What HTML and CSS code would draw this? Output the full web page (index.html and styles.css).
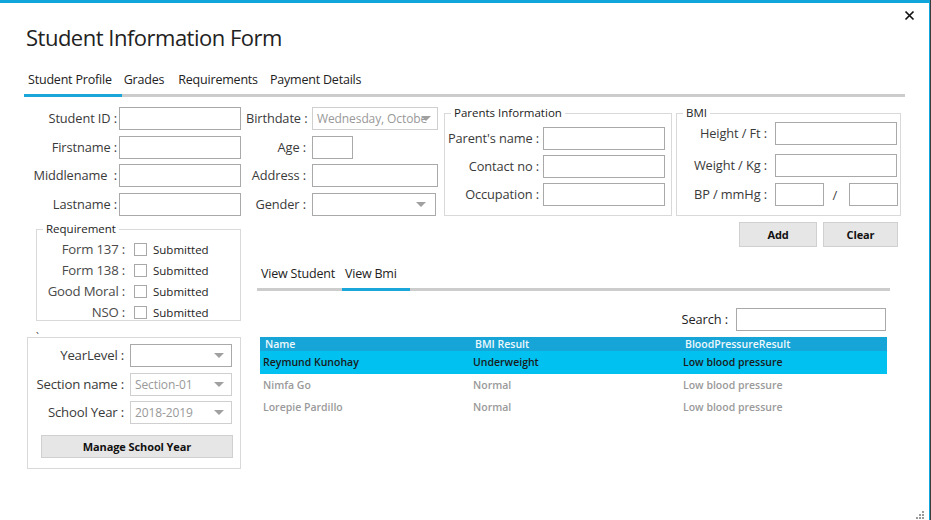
FILE: index.html
```html
<!DOCTYPE html>
<html>
<head>
<meta charset="utf-8">
<title>Student Information Form</title>
<link rel="stylesheet" href="styles.css">
</head>
<body>
<div class="window">
  <div class="titlebar">
    <h1 class="title">Student Information Form</h1>
    <span class="close"><svg width="11" height="11" viewBox="0 0 11 11"><path d="M1.5 1.5L9.5 9.5M9.5 1.5L1.5 9.5" stroke="#111" stroke-width="1.7" fill="none"/></svg></span>
  </div>

  <div class="tabs">
    <span class="tab t1">Student Profile</span>
    <span class="tab t2">Grades</span>
    <span class="tab t3">Requirements</span>
    <span class="tab t4">Payment Details</span>
  </div>
  <div class="tabbar"><div class="tabbar-active"></div></div>

  <div class="top-row">
    <div class="form form-left">
      <label>Student ID :</label><span class="input"></span>
      <label>Firstname :</label><span class="input"></span>
      <label>Middlename&nbsp;&nbsp;:</label><span class="input"></span>
      <label>Lastname :</label><span class="input"></span>
    </div>
    <div class="form form-mid">
      <label>Birthdate :</label><span class="input combo disabled wide"><span class="ctext">Wednesday, Octobe</span><span class="arrow"></span></span>
      <label>Age :</label><span class="input age"></span>
      <label>Address :</label><span class="input"></span>
      <label>Gender :</label><span class="input combo gender"><span class="ctext"></span><span class="arrow"></span></span>
    </div>
    <div class="group parents">
      <span class="legend">Parents Information</span>
      <div class="gform pform">
        <label>Parent's name :</label><span class="input"></span>
        <label>Contact no :</label><span class="input"></span>
        <label>Occupation :</label><span class="input"></span>
      </div>
    </div>
    <div class="group bmi">
      <span class="legend">BMI</span>
      <div class="bform">
        <div class="brow r1"><label>Height / Ft :</label><span class="input"></span></div>
        <div class="brow r2"><label>Weight / Kg :</label><span class="input"></span></div>
        <div class="brow r3"><label>BP / mmHg :</label><span class="input bp"></span><span class="slash">/</span><span class="input bp"></span></div>
      </div>
    </div>
  </div>

  <div class="bottom-row">
    <div class="left-col">
      <div class="group req">
        <span class="legend">Requirement</span>
        <div class="reqlist">
          <label>Form 137 :</label><span class="check"><span class="box"></span>Submitted</span>
          <label>Form 138 :</label><span class="check"><span class="box"></span>Submitted</span>
          <label>Good Moral :</label><span class="check"><span class="box"></span>Submitted</span>
          <label>NSO :</label><span class="check"><span class="box"></span>Submitted</span>
        </div>
      </div>
      <div class="group year">
        <span class="legend tick">`</span>
        <div class="yform">
          <label>YearLevel :</label><span class="input combo"><span class="ctext"></span><span class="arrow"></span></span>
          <label>Section name :</label><span class="input combo disabled"><span class="ctext">Section-01</span><span class="arrow"></span></span>
          <label>School Year :</label><span class="input combo disabled"><span class="ctext">2018-2019</span><span class="arrow"></span></span>
        </div>
        <button class="btn manage">Manage School Year</button>
      </div>
    </div>

    <div class="right-col">
      <div class="buttons">
        <button class="btn add">Add</button>
        <button class="btn clear">Clear</button>
      </div>
      <div class="itabs">
        <span class="itab">View Student</span>
        <span class="itab active">View Bmi</span>
      </div>
      <div class="itabbar"><div class="itabbar-active"></div></div>
      <div class="search">
        <label>Search :</label><span class="input search-input"></span>
      </div>
      <div class="grid">
        <div class="grow head"><span>Name</span><span>BMI Result</span><span>BloodPressureResult</span></div>
        <div class="grow sel"><span>Reymund Kunohay</span><span>Underweight</span><span>Low blood pressure</span></div>
        <div class="grow"><span>Nimfa Go</span><span>Normal</span><span>Low blood pressure</span></div>
        <div class="grow"><span>Lorepie Pardillo</span><span>Normal</span><span>Low blood pressure</span></div>
      </div>
    </div>
  </div>
  <span class="grip"><svg width="8" height="8" viewBox="0 0 8 8"><rect x="6" y="0" width="2" height="2" fill="#9a9a9a"/><rect x="3" y="3" width="2" height="2" fill="#9a9a9a"/><rect x="6" y="3" width="2" height="2" fill="#9a9a9a"/><rect x="0" y="6" width="2" height="2" fill="#9a9a9a"/><rect x="3" y="6" width="2" height="2" fill="#9a9a9a"/><rect x="6" y="6" width="2" height="2" fill="#9a9a9a"/></svg></span>
</div>
</body>
</html>
```

FILE: styles.css
```css
* { box-sizing: border-box; }
html, body { margin: 0; padding: 0; }
body {
  background: #3b3b3b;
  width: 931px;
  height: 520px;
  overflow: hidden;
  font-family: "Open Sans", "Liberation Sans", sans-serif;
  color: #333;
}
.window {
  position: relative;
  width: 930px;
  height: 520px;
  background: #fff;
  border-top: 3px solid #11a6db;
  border-right: 1px solid #11a6db;
}
.titlebar {
  display: flex;
  justify-content: space-between;
  height: 60px;
}
.title {
  margin: 0;
  padding: 19px 0 0 26px;
  font-weight: 400;
  font-size: 22px;
  line-height: 30px;
  color: #222;
  letter-spacing: -0.5px;
}
.close {
  display: block;
  margin: 7px 14px 0 0;
  width: 11px;
  height: 11px;
}
.close svg { display: block; }

.tabs {
  display: flex;
  padding-left: 28px;
  height: 31px;
  font-size: 12.5px;
  line-height: 18px;
  color: #222;
  letter-spacing: -0.2px;
}
.tab { display: block; padding-top: 8px; }
.t2 { margin-left: 12px; }
.t3 { margin-left: 14px; }
.t4 { margin-left: 12px; }
.tabbar {
  margin-left: 24px;
  width: 881px;
  height: 3px;
  background: #cccccc;
}
.tabbar-active { width: 98px; height: 3px; background: #1aa6d9; }

/* common controls */
label {
  display: block;
  text-align: right;
  font-size: 12.8px;
  line-height: 23px;
  color: #3a3a3a;
  white-space: nowrap;
  letter-spacing: -0.1px;
}
.input {
  display: flex;
  align-items: center;
  height: 23px;
  width: 122px;
  border: 1px solid #a9a9a9;
  background: #fff;
}
.combo { position: relative; }
.ctext {
  flex: 1;
  overflow: hidden;
  white-space: nowrap;
  font-size: 12px;
  color: #999;
  padding-left: 4px;
  letter-spacing: -0.1px;
}
.arrow {
  flex: none;
  width: 0;
  height: 0;
  margin-right: 7px;
  border-left: 5px solid transparent;
  border-right: 5px solid transparent;
  border-top: 5px solid #a0a0a0;
}
.disabled { border-color: #cfcfcf; }

.top-row {
  display: flex;
  align-items: flex-start;
  padding: 10px 0 0 27px;
  height: 119px;
}
.form {
  display: grid;
  row-gap: 5.67px;
  column-gap: 2px;
}
.form-left { grid-template-columns: 90px 122px; }
.form-mid { grid-template-columns: 60px 126px; column-gap: 6px; margin-left: 5px; }
.form-mid .input { width: 126px; }
.form-mid .age { width: 41px; }
.form-mid .gender { width: 124px; }
.form-mid .gender .arrow { margin-right: 9px; }
.form-mid .wide .ctext { flex: none; overflow: visible; }
.form-mid .wide .arrow { margin-left: -6px; }

.group {
  border: 1px solid #d9d9d9;
  background: #fff;
}
.legend {
  display: block;
  width: max-content;
  margin: -9px 0 0 6px;
  padding: 0 3px;
  background: #fff;
  font-size: 11.5px;
  line-height: 16px;
  color: #222;
}
.parents {
  margin: 6px 0 0 6px;
  width: 228px;
  height: 103px;
}
.gform {
  display: grid;
  grid-template-columns: 93px 122px;
  column-gap: 4px;
  row-gap: 5px;
  margin: 6px 0 0 1px;
}
.bmi {
  margin: 6px 0 0 4px;
  width: 225px;
  height: 103px;
}
.bform { margin-top: 1px; }
.brow {
  display: flex;
  align-items: center;
}
.brow label { width: 90px; margin-right: 8px; }
.brow.r2 { margin-top: 9px; }
.brow.r3 { margin-top: 6px; }
.bp { width: 49px; }
.slash { width: 25px; text-align: center; font-size: 13px; color: #444; padding-right: 3px; }

.bottom-row {
  display: flex;
  align-items: flex-start;
}
.left-col {
  width: 241px;
  padding-left: 27px;
}
.req {
  margin: 13px 0 0 9px;
  width: 205px;
  height: 92px;
}
.reqlist {
  display: grid;
  grid-template-columns: 88px auto;
  column-gap: 9px;
  margin-top: 2px;
}
.reqlist label { line-height: 21px; color: #4a4a4a; font-size: 13.2px; letter-spacing: -0.2px; }
.check {
  display: flex;
  align-items: center;
  font-size: 11.5px;
  color: #222;
  line-height: 21px;
}
.box {
  width: 13px;
  height: 13px;
  border: 1px solid #a8a8a8;
  margin-right: 6px;
  background: #fff;
}
.year {
  margin-top: 16px;
  width: 214px;
  height: 132px;
}
.legend.tick {
  margin-left: 7px;
  padding: 0 1px;
  font-size: 10px;
  line-height: 10px;
  height: 10px;
  margin-top: -6px;
  color: #333;
  background: transparent;
}
.yform {
  display: grid;
  grid-template-columns: 96px 102px;
  column-gap: 6px;
  row-gap: 5.5px;
  margin: 2px 0 0 0;
}
.yform label { font-size: 13.2px; letter-spacing: -0.2px; color: #3a3a3a; }
.yform .input { width: 102px; }
.btn {
  display: block;
  font-family: "Open Sans", "Liberation Sans", sans-serif;
  font-weight: 700;
  font-size: 11px;
  color: #111;
  background: #e6e6e6;
  border: 1px solid #d0d0d0;
  padding: 0;
  letter-spacing: -0.1px;
}
.manage {
  margin: 11px 0 0 13px;
  width: 192px;
  height: 23px;
}

.right-col {
  margin-left: 16px;
  width: 641px;
}
.buttons {
  display: flex;
  justify-content: flex-end;
  gap: 6px;
  margin-top: 6px;
}
.add { width: 78px; height: 25px; }
.clear { width: 75px; height: 25px; }
.itabs {
  display: flex;
  gap: 10px;
  padding-left: 4px;
  margin-top: 18px;
  font-size: 12.5px;
  line-height: 18px;
  color: #222;
  letter-spacing: -0.2px;
}
.itabbar {
  margin-top: 5px;
  width: 633px;
  height: 3px;
  background: #cccccc;
}
.itabbar-active { margin-left: 85px; width: 68px; height: 3px; background: #1aa6d9; }
.search {
  display: flex;
  justify-content: flex-end;
  align-items: center;
  gap: 8px;
  margin-top: 17px;
  padding-right: 12px;
}
.search label { font-size: 12.8px; color: #222; }
.search-input { width: 150px; }
.grid {
  margin: 6px 0 0 3px;
  width: 627px;
  font-size: 10.5px;
  font-weight: 600;
}
.grow {
  display: grid;
  grid-template-columns: 210px 210px 207px;
  height: 22px;
  line-height: 22px;
  color: #9a9a9a;
  padding-left: 3px;
}
.grow span { white-space: nowrap; }
.grow.head {
  height: 14px;
  line-height: 14px;
  background: #17a5d7;
  color: #eef8fc;
  padding-left: 5px;
}
.grow.sel {
  height: 23px;
  line-height: 23px;
  background: #00c1f0;
  color: #1a1a1a;
}
.grip {
  position: absolute;
  right: 5px;
  bottom: 1px;
  width: 8px;
  height: 8px;
}
.grip svg { display: block; }
```
